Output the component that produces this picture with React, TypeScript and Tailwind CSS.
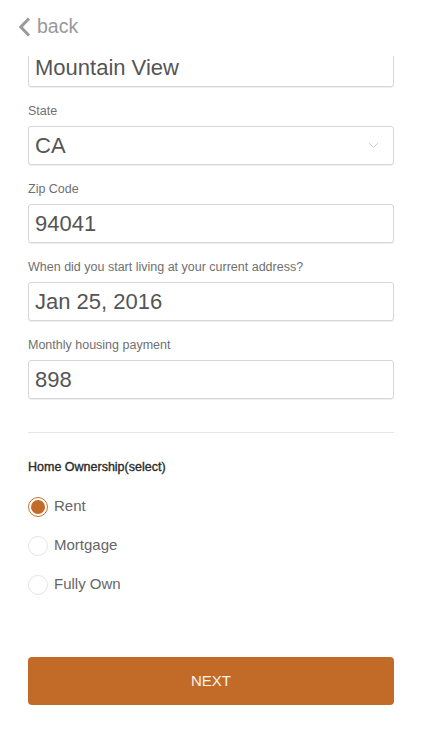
import { useState } from "react";

const font = { fontFamily: '"Liberation Sans", Arial, sans-serif' };

function Field({ label, value, select }: { label?: string; value: string; select?: boolean }) {
  return (
    <div>
      {label && <p className="pt-[17px] pb-[7px] text-[12.5px] leading-[15px] text-[#707070]">{label}</p>}
      <div className="flex h-[39px] items-center justify-between rounded-[3px] border border-[#d6d6d6] pl-[6px] pr-[14px] shadow-[0_1px_1px_rgba(0,0,0,0.07)]">
        <span className="text-[22px] leading-none text-[#555]">{value}</span>
        {select && (
          <svg width="11" height="7" viewBox="0 0 11 7" fill="none">
            <path d="M1 1l4.5 4.5L10 1" stroke="#cfcfcf" strokeWidth="1" />
          </svg>
        )}
      </div>
    </div>
  );
}

function Radio({ label, checked, onClick }: { label: string; checked: boolean; onClick: () => void }) {
  return (
    <button onClick={onClick} className="flex h-[39px] w-full items-center gap-[6px] text-left">
      <span
        className={
          checked
            ? "flex h-[20px] w-[20px] items-center justify-center rounded-full border border-[#c9702e]"
            : "h-[20px] w-[20px] rounded-full border border-[#e4e4e4]"
        }
      >
        {checked && <span className="h-[14px] w-[14px] rounded-full bg-[#c26a27]" />}
      </span>
      <span className="text-[15px] text-[#666]">{label}</span>
    </button>
  );
}

export default function App() {
  const [own, setOwn] = useState("Rent");

  return (
    <div className="flex h-[750px] w-[422px] flex-col overflow-hidden bg-white" style={font}>
      <div className="flex h-[56px] shrink-0 items-center gap-[6px] pl-[18px] pb-[2px]">
        <svg width="13" height="20" viewBox="0 0 13 20" fill="none">
          <path d="M11 1.5L2.8 10l8.2 8.5" stroke="#9a9a9a" strokeWidth="3" />
        </svg>
        <span className="text-[19.5px] text-[#999]">back</span>
      </div>

      <div className="flex-1 overflow-hidden">
        <div className="-mt-[8px] px-[28px]">
          <Field value="Mountain View" />
          <Field label="State" value="CA" select />
          <Field label="Zip Code" value="94041" />
          <Field label="When did you start living at your current address?" value="Jan 25, 2016" />
          <Field label="Monthly housing payment" value="898" />

          <div className="mt-[33px] h-px bg-[#e6e6e6]" />

          <p className="mt-[26px] text-[12.5px] leading-[16px] text-[#2a2a2a] [-webkit-text-stroke:0.35px_#2a2a2a]">
            Home Ownership(select)
          </p>

          <div className="mt-[12px]">
            {["Rent", "Mortgage", "Fully Own"].map((o) => (
              <Radio key={o} label={o} checked={own === o} onClick={() => setOwn(o)} />
            ))}
          </div>

          <button className="mt-[53px] flex h-[48px] w-full items-center justify-center rounded-[4px] bg-[#c26a27] text-[15px] text-[#fdf3ea]">
            NEXT
          </button>
        </div>
      </div>
    </div>
  );
}
